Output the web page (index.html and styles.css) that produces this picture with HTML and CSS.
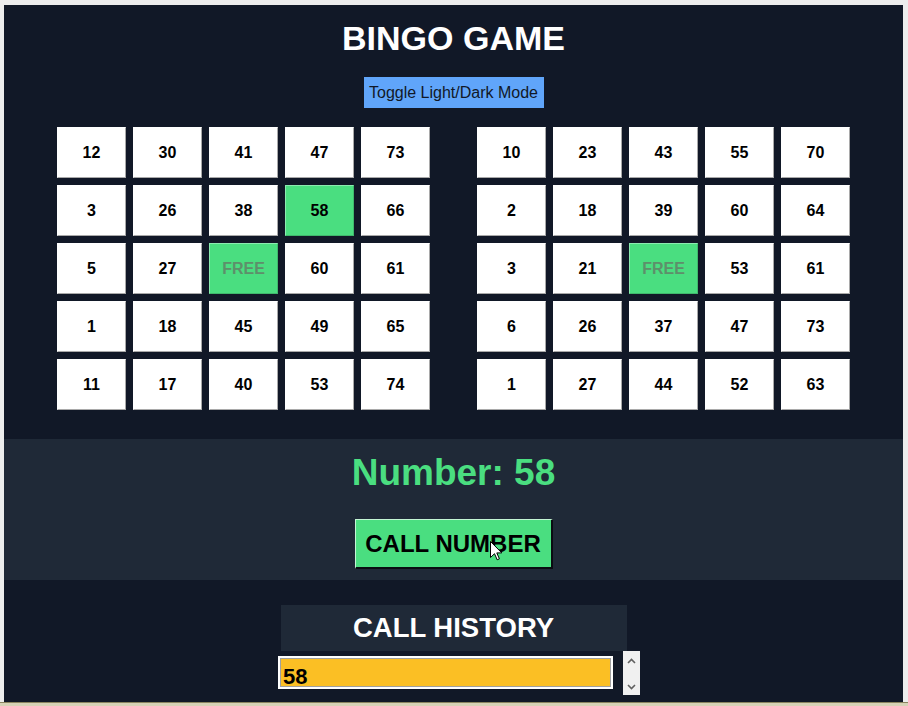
FILE: index.html
```html
<!DOCTYPE html>
<html>
<head>
    <meta charset="UTF-8">
    <title>Bingo Game</title>
    <link rel="stylesheet" href="styles.css">
</head>
<body>
    <div class="app">
        <h1 class="title">BINGO GAME</h1>

        <button class="toggle">Toggle Light/Dark Mode</button>

        <div class="boards">
            <div class="board">
                <div class="cell">12</div>
                <div class="cell">30</div>
                <div class="cell">41</div>
                <div class="cell">47</div>
                <div class="cell">73</div>

                <div class="cell">3</div>
                <div class="cell">26</div>
                <div class="cell">38</div>
                <div class="cell marked">58</div>
                <div class="cell">66</div>

                <div class="cell">5</div>
                <div class="cell">27</div>
                <div class="cell marked free">FREE</div>
                <div class="cell">60</div>
                <div class="cell">61</div>

                <div class="cell">1</div>
                <div class="cell">18</div>
                <div class="cell">45</div>
                <div class="cell">49</div>
                <div class="cell">65</div>

                <div class="cell">11</div>
                <div class="cell">17</div>
                <div class="cell">40</div>
                <div class="cell">53</div>
                <div class="cell">74</div>
            </div>

            <div class="board">
                <div class="cell">10</div>
                <div class="cell">23</div>
                <div class="cell">43</div>
                <div class="cell">55</div>
                <div class="cell">70</div>

                <div class="cell">2</div>
                <div class="cell">18</div>
                <div class="cell">39</div>
                <div class="cell">60</div>
                <div class="cell">64</div>

                <div class="cell">3</div>
                <div class="cell">21</div>
                <div class="cell marked free">FREE</div>
                <div class="cell">53</div>
                <div class="cell">61</div>

                <div class="cell">6</div>
                <div class="cell">26</div>
                <div class="cell">37</div>
                <div class="cell">47</div>
                <div class="cell">73</div>

                <div class="cell">1</div>
                <div class="cell">27</div>
                <div class="cell">44</div>
                <div class="cell">52</div>
                <div class="cell">63</div>
            </div>
        </div>

        <div class="band">
            <div class="number">Number: 58</div>
            <button class="call">
                CALL NUMBER
                <svg class="cursor" width="13" height="20" viewBox="0 0 13 20">
                    <path d="M0.5 0.5 L0.5 16.5 L4.5 12.7 L7.2 18.8 L9.4 17.8 L6.8 11.9 L11.8 11.9 Z" fill="#fff" stroke="#000" stroke-width="1"/>
                </svg>
            </button>
        </div>

        <div class="history-title">CALL HISTORY</div>

        <div class="history">
            <div class="listbox">
                <div class="entry">58</div>
            </div>
            <div class="scrollbar">
                <svg width="9" height="6" viewBox="0 0 9 6"><path d="M1 5 L4.5 1.5 L8 5" fill="none" stroke="#606060" stroke-width="1.6"/></svg>
                <svg width="9" height="6" viewBox="0 0 9 6"><path d="M1 1 L4.5 4.5 L8 1" fill="none" stroke="#606060" stroke-width="1.6"/></svg>
            </div>
        </div>
    </div>
    <div class="taskbar"></div>
</body>
</html>
```

FILE: styles.css
```css
html, body {
    margin: 0;
    height: 100%;
}
body {
    font-family: "Liberation Sans", Arial, sans-serif;
    background-color: #ededed;
    display: flex;
    flex-direction: column;
    overflow: hidden;
}
.app {
    margin: 5px 5px 0 4px;
    height: 697px;
    background-color: #111827;
    display: flex;
    flex-direction: column;
    align-items: center;
}
.title {
    margin: 13px 0 0;
    font-size: 34px;
    line-height: 40px;
    font-weight: bold;
    color: #fff;
}
.toggle {
    margin-top: 19px;
    height: 31px;
    width: 180px;
    padding: 0;
    border: none;
    background-color: #60a5fa;
    color: #111827;
    font-family: inherit;
    font-size: 16px;
}
.boards {
    margin-top: 19px;
    display: flex;
    gap: 47px;
}
.board {
    display: grid;
    grid-template-columns: repeat(5, 69px);
    grid-auto-rows: 51px;
    gap: 7px;
}
.cell {
    box-sizing: border-box;
    display: flex;
    align-items: center;
    justify-content: center;
    background-color: #fff;
    border: 1px solid;
    border-color: #fff #a9a9a9 #a9a9a9 #fff;
    font-size: 16px;
    font-weight: bold;
    color: #000;
}
.cell.marked {
    background-color: #4ade80;
    border-color: #8cebb0 #3fb86c #3fb86c #8cebb0;
}
.cell.free {
    color: #5e8f6b;
}
.band {
    align-self: stretch;
    margin-top: 29px;
    padding: 12px 0 11px;
    background-color: #1f2937;
    display: flex;
    flex-direction: column;
    align-items: center;
}
.number {
    font-size: 37px;
    line-height: 44px;
    font-weight: bold;
    color: #4ade80;
}
.call {
    position: relative;
    margin-top: 24px;
    box-sizing: border-box;
    width: 198px;
    height: 50px;
    padding: 0;
    background-color: #4ade80;
    border-style: solid;
    border-width: 1px 2px 2px 1px;
    border-color: #c4f5d4 #0a0d12 #0a0d12 #c4f5d4;
    font-family: inherit;
    font-size: 24px;
    font-weight: bold;
    color: #000;
}
.cursor {
    position: absolute;
    left: 134px;
    top: 21px;
}
.history-title {
    margin-top: 25px;
    width: 346px;
    height: 46px;
    background-color: #1f2937;
    color: #fff;
    font-size: 27.5px;
    font-weight: bold;
    display: flex;
    align-items: center;
    justify-content: center;
}
.history {
    display: flex;
    align-items: flex-start;
    gap: 10px;
    padding-left: 11px;
}
.listbox {
    box-sizing: border-box;
    margin-top: 5px;
    width: 335px;
    height: 33px;
    background-color: #fbbf24;
    border: 2px solid #fff;
    box-shadow: inset 0 0 0 1px #a0a0a0;
    overflow: hidden;
}
.entry {
    padding: 5px 0 0 3px;
    font-size: 22px;
    line-height: 27px;
    font-weight: bold;
    color: #000;
}
.scrollbar {
    width: 17px;
    height: 44px;
    background-color: #f0f0f0;
    display: flex;
    flex-direction: column;
    align-items: center;
    justify-content: space-between;
    padding: 7px 0 5px;
    box-sizing: border-box;
}
.taskbar {
    flex: 1;
    border-top: 1px solid #8a8460;
    background-color: #d6d2b6;
}
```
